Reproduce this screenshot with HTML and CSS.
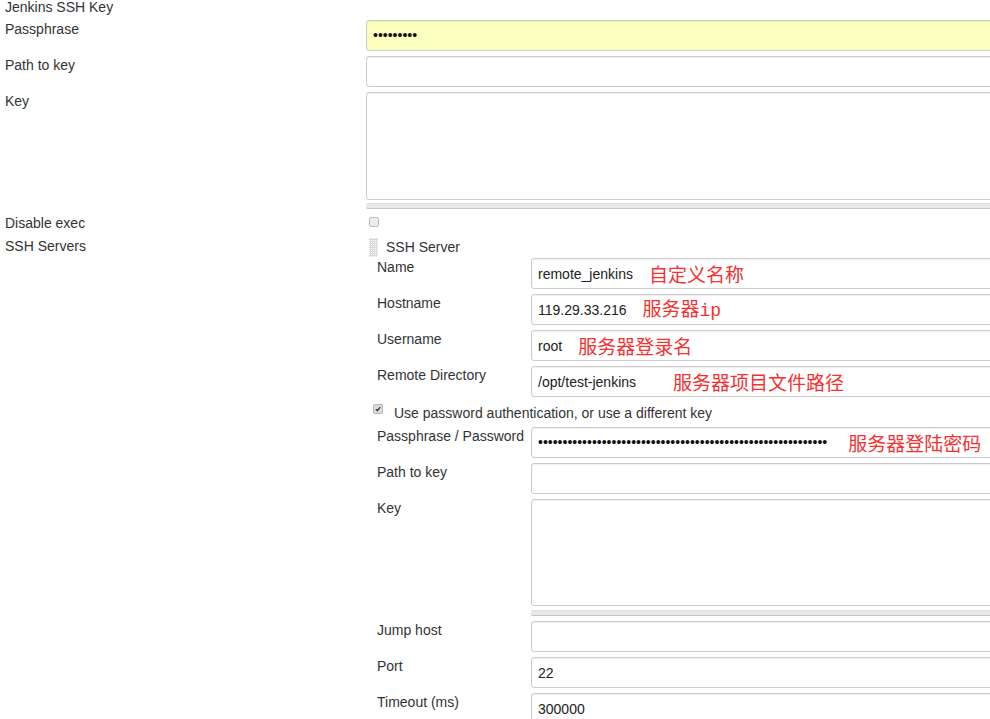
FILE: index.html
```html
<!DOCTYPE html>
<html lang="zh-CN">
<head>
<meta charset="utf-8">
<title>Jenkins SSH</title>
<link rel="stylesheet" href="styles.css">
</head>
<body>
<div class="form">
  <div class="row row-title"><div class="label">Jenkins SSH Key</div></div>

  <div class="row">
    <div class="label">Passphrase</div>
    <div class="field"><div class="input input-auto"><span class="dots">•••••••••</span></div></div>
  </div>

  <div class="row">
    <div class="label">Path to key</div>
    <div class="field"><div class="input"></div></div>
  </div>

  <div class="row">
    <div class="label">Key</div>
    <div class="field">
      <div class="textarea"></div>
      <div class="grip-bar"></div>
    </div>
  </div>

  <div class="row row-check">
    <div class="label">Disable exec</div>
    <div class="field"><span class="checkbox"></span></div>
  </div>

  <div class="row">
    <div class="label">SSH Servers</div>
    <div class="field">
      <div class="server">
        <div class="server-head"><span class="drag"></span><span class="server-title">SSH Server</span></div>

        <div class="srow">
          <div class="label">Name</div>
          <div class="input"><span class="value">remote_jenkins</span><span class="note">自定义名称</span></div>
        </div>
        <div class="srow">
          <div class="label">Hostname</div>
          <div class="input"><span class="value">119.29.33.216</span><span class="note">服务器<span class="latin">ip</span></span></div>
        </div>
        <div class="srow">
          <div class="label">Username</div>
          <div class="input"><span class="value">root</span><span class="note">服务器登录名</span></div>
        </div>
        <div class="srow">
          <div class="label">Remote Directory</div>
          <div class="input"><span class="value">/opt/test-jenkins</span><span class="note note-wide">服务器项目文件路径</span></div>
        </div>

        <div class="optrow">
          <span class="checkbox checkbox-on"><svg viewBox="0 0 10 10" width="10" height="10"><path d="M2.3 5.2 L4.2 7.2 L7.8 2.6" fill="none" stroke="#333" stroke-width="1.6"/></svg></span>
          <span class="opt-text">Use password authentication, or use a different key</span>
        </div>

        <div class="srow">
          <div class="label">Passphrase / Password</div>
          <div class="input"><span class="dots">•••••••••••••••••••••••••••••••••••••••••••••••••••••••••••</span><span class="note note-pw">服务器登陆密码</span></div>
        </div>
        <div class="srow">
          <div class="label">Path to key</div>
          <div class="input"></div>
        </div>
        <div class="srow">
          <div class="label">Key</div>
          <div class="areawrap">
            <div class="textarea"></div>
            <div class="grip-bar"></div>
          </div>
        </div>
        <div class="srow">
          <div class="label">Jump host</div>
          <div class="input"></div>
        </div>
        <div class="srow">
          <div class="label">Port</div>
          <div class="input"><span class="value">22</span></div>
        </div>
        <div class="srow">
          <div class="label">Timeout (ms)</div>
          <div class="input"><span class="value">300000</span></div>
        </div>
      </div>
    </div>
  </div>
</div>
</body>
</html>
```

FILE: styles.css
```css
html, body {
  margin: 0;
  padding: 0;
  background: #fff;
  overflow: hidden;
}

body {
  font-family: "Liberation Sans", Arial, sans-serif;
  font-size: 14px;
  line-height: 17px;
  color: #333;
}

.form {
  width: 1010px;
  padding-left: 5px;
  margin-top: -3px;
  display: flex;
  flex-direction: column;
  gap: 5px;
}

.row {
  display: grid;
  grid-template-columns: 361px 1fr;
  align-items: start;
}

.row-title {
  height: 18px;
}

.row-title .label {
  padding-top: 2px;
}

.row-check {
  height: 18px;
}

.label {
  padding-top: 1px;
  white-space: nowrap;
}

.field {
  min-width: 0;
}

.input {
  box-sizing: border-box;
  height: 31px;
  border: 1px solid #ccc;
  border-radius: 3px;
  box-shadow: inset 0 1px 1px rgba(0, 0, 0, 0.06);
  background: #fff;
  padding: 0 6px;
  display: flex;
  align-items: center;
  white-space: nowrap;
  overflow: hidden;
}

.input-auto {
  background: #faffbd;
}

.value {
  color: #222;
  padding-top: 1px;
}

.dots {
  color: #111;
  font-size: 14px;
  letter-spacing: 0;
}

.textarea {
  box-sizing: border-box;
  height: 108px;
  border: 1px solid #ccc;
  border-radius: 3px;
  box-shadow: inset 0 1px 1px rgba(0, 0, 0, 0.06);
  background: #fff;
}

.grip-bar {
  box-sizing: border-box;
  height: 6px;
  margin-top: 3px;
  background: #e9e9e9;
  border-top: 1px solid #ddd;
  border-bottom: 1px solid #c4c4c4;
  border-radius: 2px 0 0 2px;
}

.checkbox {
  box-sizing: border-box;
  display: block;
  width: 10px;
  height: 10px;
  margin: 3px 0 0 3px;
  border: 1px solid #bdbdbd;
  border-radius: 2px;
  background: #ececec;
}

.checkbox-on {
  margin: 0;
  background: #dcdcdc;
  border-color: #b5b5b5;
  display: flex;
  align-items: center;
  justify-content: center;
}

.checkbox-on svg {
  display: block;
}

.server {
  display: flex;
  flex-direction: column;
  gap: 5px;
}

.server-head {
  height: 21px;
  margin-bottom: -5px;
  display: flex;
  align-items: flex-start;
}

.drag {
  display: block;
  width: 9px;
  height: 19px;
  margin: 1px 0 0 3px;
  background-color: #fafafa;
  background-image:
    repeating-linear-gradient(0deg, transparent 0 1px, #d6d6d6 1px 2px),
    repeating-linear-gradient(90deg, transparent 0 1px, #e2e2e2 1px 2px);
}

.server-title {
  margin-left: 8px;
  padding-top: 2px;
}

.srow {
  display: grid;
  grid-template-columns: 154px 1fr;
  padding-left: 11px;
  align-items: start;
}

.areawrap {
  display: flex;
  flex-direction: column;
}

.areawrap .textarea {
  height: 107px;
}

.areawrap .grip-bar {
  margin-top: 4px;
}

.optrow {
  height: 20px;
  display: flex;
  align-items: flex-start;
  padding-left: 7px;
}

.optrow .checkbox {
  margin-top: 2px;
}

.opt-text {
  margin-left: 11px;
  padding-top: 3px;
}

.note {
  margin-left: 16px;
  color: #f5302f;
  font-family: "Noto Sans CJK SC", "Noto Sans", sans-serif;
  font-size: 19px;
  line-height: 22px;
}

.note-wide {
  margin-left: 37px;
}

.note-pw {
  margin-left: 21px;
}

.latin {
  font-family: "Liberation Mono", monospace;
  font-size: 18px;
}
```
